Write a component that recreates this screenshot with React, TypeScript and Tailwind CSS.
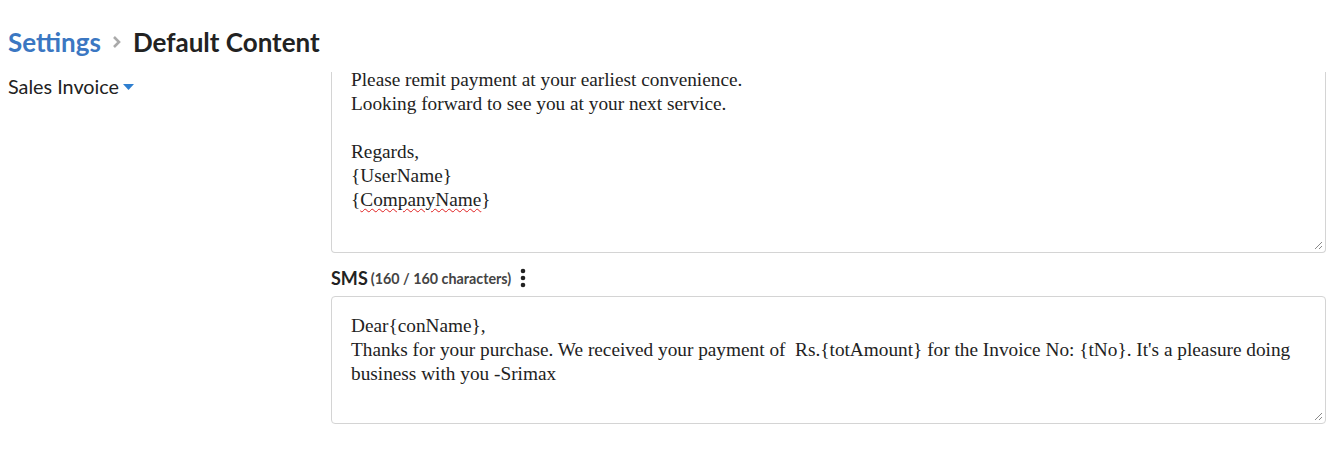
import React from "react";

const Grip = () => (
  <svg className="absolute right-[2px] bottom-[2px]" width="10" height="10" viewBox="0 0 10 10">
    <line x1="9" y1="2" x2="2" y2="9" stroke="#8a8a8a" strokeWidth="1" />
    <line x1="9" y1="6" x2="6" y2="9" stroke="#8a8a8a" strokeWidth="1" />
  </svg>
);

export default function App() {
  const serif = { fontFamily: '"Liberation Serif", "Times New Roman", serif' } as React.CSSProperties;
  return (
    <div className="w-[1340px] h-[453px] bg-white overflow-hidden" style={{ fontFamily: 'Lato, "Noto Sans", sans-serif' }}>
      <div className="pt-[26px] pl-[8px] flex items-center h-[32px] box-content">
        <span className="text-[26px] font-bold text-[#3b77c2] leading-[32px]">Settings</span>
        <svg className="mx-[11px]" width="10" height="14" viewBox="0 0 10 14">
          <path d="M2 2 L7 7 L2 12" fill="none" stroke="#aaaaaa" strokeWidth="2.6" />
        </svg>
        <span className="text-[26px] font-bold text-[#222222] leading-[32px]">Default Content</span>
      </div>
      <div className="flex mt-[14px]">
        <div className="w-[331px] shrink-0 pl-[8px] pt-[2px] flex items-start">
          <span className="text-[19.8px] text-[#222222] leading-[24px]">Sales Invoice</span>
          <svg className="ml-[4px] mt-[10px]" width="11" height="6" viewBox="0 0 11 6">
            <path d="M0 0 L11 0 L5.5 6 Z" fill="#2e7fd0" />
          </svg>
        </div>
        <div className="w-[995px] flex flex-col">
          <div className="relative h-[181px] border-x border-b border-[#d4d4d4] rounded-b-[4px] overflow-hidden">
            <div className="pl-[19px] -mt-[4px] text-[19.3px] leading-[24px] text-[#222222]" style={serif}>
              <div>Please remit payment at your earliest convenience.</div>
              <div>Looking forward to see you at your next service.</div>
              <div>&nbsp;</div>
              <div>Regards,</div>
              <div>{"{UserName}"}</div>
              <div>
                {"{"}
                <span className="underline decoration-wavy decoration-[#e02020] decoration-1 underline-offset-2">CompanyName</span>
                {"}"}
              </div>
            </div>
            <Grip />
          </div>
          <div className="flex items-center mt-[13px] h-[24px]">
            <span className="text-[18px] font-bold text-[#222222]">SMS</span>
            <span className="text-[14.3px] font-bold text-[#444444] ml-[3px] mt-[2px]">(160 / 160 characters)</span>
            <svg className="ml-[9px]" width="6" height="20" viewBox="0 0 6 20">
              <circle cx="3" cy="3" r="2.3" fill="#222222" />
              <circle cx="3" cy="10" r="2.3" fill="#222222" />
              <circle cx="3" cy="17" r="2.3" fill="#222222" />
            </svg>
          </div>
          <div className="relative mt-[6px] h-[128px] border border-[#d4d4d4] rounded-[4px]">
            <div className="pl-[19px] pt-[17px] text-[19.3px] leading-[24px] text-[#222222] whitespace-pre" style={serif}>
              <div>Dear{"{conName}"},</div>
              <div>Thanks for your purchase. We received your payment of  Rs.{"{totAmount}"} for the Invoice No: {"{tNo}"}. It's a pleasure doing</div>
              <div>business with you -Srimax</div>
            </div>
            <Grip />
          </div>
        </div>
      </div>
    </div>
  );
}
